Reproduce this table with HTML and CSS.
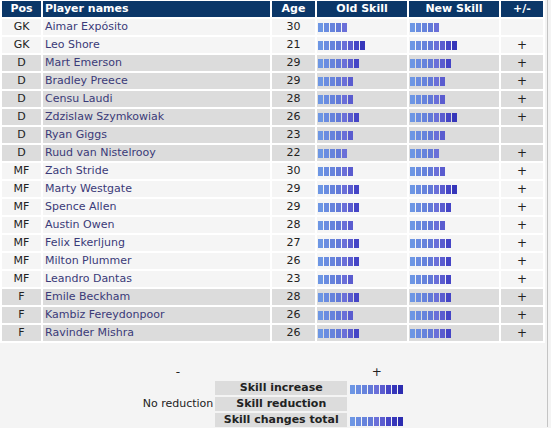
FILE: index.html
```html
<!DOCTYPE html>
<html>
<head>
<meta charset="utf-8">
<link rel="stylesheet" href="styles.css">
</head>
<body>
<div class="page">
<table class="squad">
  <thead>
    <tr>
      <th class="c-pos">Pos</th>
      <th class="c-name">Player names</th>
      <th class="c-age">Age</th>
      <th class="c-skill">Old Skill</th>
      <th class="c-skill">New Skill</th>
      <th class="c-pm">+/-</th>
    </tr>
  </thead>
  <tbody>
    <tr><td class="pos">GK</td><td class="name">Aimar Expósito</td><td class="age">30</td><td class="sk"><div class="bar" style="width:29px"></div></td><td class="sk"><div class="bar" style="width:29px"></div></td><td class="pm"></td></tr>
    <tr><td class="pos">GK</td><td class="name">Leo Shore</td><td class="age">21</td><td class="sk"><div class="bar" style="width:47px"></div></td><td class="sk"><div class="bar" style="width:47px"></div></td><td class="pm">+</td></tr>
    <tr class="alt"><td class="pos">D</td><td class="name">Mart Emerson</td><td class="age">29</td><td class="sk"><div class="bar" style="width:41px"></div></td><td class="sk"><div class="bar" style="width:41px"></div></td><td class="pm">+</td></tr>
    <tr class="alt"><td class="pos">D</td><td class="name">Bradley Preece</td><td class="age">29</td><td class="sk"><div class="bar" style="width:35px"></div></td><td class="sk"><div class="bar" style="width:35px"></div></td><td class="pm">+</td></tr>
    <tr class="alt"><td class="pos">D</td><td class="name">Censu Laudi</td><td class="age">28</td><td class="sk"><div class="bar" style="width:35px"></div></td><td class="sk"><div class="bar" style="width:35px"></div></td><td class="pm">+</td></tr>
    <tr class="alt"><td class="pos">D</td><td class="name">Zdzislaw Szymkowiak</td><td class="age">26</td><td class="sk"><div class="bar" style="width:41px"></div></td><td class="sk"><div class="bar" style="width:47px"></div></td><td class="pm">+</td></tr>
    <tr class="alt"><td class="pos">D</td><td class="name">Ryan Giggs</td><td class="age">23</td><td class="sk"><div class="bar" style="width:35px"></div></td><td class="sk"><div class="bar" style="width:35px"></div></td><td class="pm"></td></tr>
    <tr class="alt"><td class="pos">D</td><td class="name">Ruud van Nistelrooy</td><td class="age">22</td><td class="sk"><div class="bar" style="width:29px"></div></td><td class="sk"><div class="bar" style="width:29px"></div></td><td class="pm">+</td></tr>
    <tr><td class="pos">MF</td><td class="name">Zach Stride</td><td class="age">30</td><td class="sk"><div class="bar" style="width:35px"></div></td><td class="sk"><div class="bar" style="width:35px"></div></td><td class="pm">+</td></tr>
    <tr><td class="pos">MF</td><td class="name">Marty Westgate</td><td class="age">29</td><td class="sk"><div class="bar" style="width:41px"></div></td><td class="sk"><div class="bar" style="width:47px"></div></td><td class="pm">+</td></tr>
    <tr><td class="pos">MF</td><td class="name">Spence Allen</td><td class="age">29</td><td class="sk"><div class="bar" style="width:41px"></div></td><td class="sk"><div class="bar" style="width:41px"></div></td><td class="pm">+</td></tr>
    <tr><td class="pos">MF</td><td class="name">Austin Owen</td><td class="age">28</td><td class="sk"><div class="bar" style="width:35px"></div></td><td class="sk"><div class="bar" style="width:35px"></div></td><td class="pm">+</td></tr>
    <tr><td class="pos">MF</td><td class="name">Felix Ekerljung</td><td class="age">27</td><td class="sk"><div class="bar" style="width:41px"></div></td><td class="sk"><div class="bar" style="width:41px"></div></td><td class="pm">+</td></tr>
    <tr><td class="pos">MF</td><td class="name">Milton Plummer</td><td class="age">26</td><td class="sk"><div class="bar" style="width:41px"></div></td><td class="sk"><div class="bar" style="width:41px"></div></td><td class="pm">+</td></tr>
    <tr><td class="pos">MF</td><td class="name">Leandro Dantas</td><td class="age">23</td><td class="sk"><div class="bar" style="width:35px"></div></td><td class="sk"><div class="bar" style="width:41px"></div></td><td class="pm">+</td></tr>
    <tr class="alt"><td class="pos">F</td><td class="name">Emile Beckham</td><td class="age">28</td><td class="sk"><div class="bar" style="width:41px"></div></td><td class="sk"><div class="bar" style="width:41px"></div></td><td class="pm">+</td></tr>
    <tr class="alt"><td class="pos">F</td><td class="name">Kambiz Fereydonpoor</td><td class="age">26</td><td class="sk"><div class="bar" style="width:35px"></div></td><td class="sk"><div class="bar" style="width:41px"></div></td><td class="pm">+</td></tr>
    <tr class="alt"><td class="pos">F</td><td class="name">Ravinder Mishra</td><td class="age">26</td><td class="sk"><div class="bar" style="width:41px"></div></td><td class="sk"><div class="bar" style="width:41px"></div></td><td class="pm">+</td></tr>
  </tbody>
</table>

<table class="legend">
  <tr><td class="l-left l-sign">-</td><td class="l-mid l-blank"></td><td class="l-right l-sign">+</td></tr>
  <tr><td class="l-left"></td><td class="l-mid">Skill increase</td><td class="l-right"><div class="bar" style="width:53px"></div></td></tr>
  <tr><td class="l-left">No reduction</td><td class="l-mid">Skill reduction</td><td class="l-right"></td></tr>
  <tr><td class="l-left"></td><td class="l-mid">Skill changes total</td><td class="l-right"><div class="bar" style="width:53px"></div></td></tr>
</table>
</div>
</body>
</html>
```

FILE: styles.css
```css
html, body {
  margin: 0;
  padding: 0;
  background: #f4f4f4;
}
body {
  font-family: "DejaVu Sans", Verdana, sans-serif;
  font-size: 11px;
  color: #222;
}
.page {
  width: 548px;
  height: 428px;
  border-right: 1px solid #c4c4c4;
  box-sizing: border-box;
  background: #f4f4f4;
}
.squad {
  border-collapse: separate;
  border-spacing: 2px;
  table-layout: fixed;
  width: 545px;
  background: #fff;
  margin-top: -1px;
}
.squad th {
  background: #0b3768;
  color: #fff;
  font-weight: bold;
  height: 16px;
  padding: 0;
  text-align: center;
  line-height: 16px;
}
.squad th.c-name { text-align: left; padding-left: 2px; }
.c-pos { width: 39px; }
.c-name { width: 225px; }
.c-age { width: 43px; }
.c-skill { width: 90px; }
.c-pm { width: 42px; }
.squad td {
  background: #f5f5f5;
  height: 16px;
  padding: 0;
  line-height: 16px;
  white-space: nowrap;
}
.squad tr.alt td { background: #dcdcdc; }
.pos { text-align: center; }
.name { color: #3a3a78; padding-left: 2px !important; }
.age { text-align: center; }
.sk { padding-left: 1px !important; }
.pm { text-align: center; font-size: 12px; }
.bar {
  height: 9px;
  margin-top: 1px;
  background: linear-gradient(to right,
    #6d96e4 0 6px, #6a8ce0 6px 12px, #6683dc 12px 18px, #6279d8 18px 24px,
    #6a6fd8 24px 30px, #5a5ccf 30px 36px, #4545c6 36px 42px, #3636ba 42px 48px, #2c2cb0 48px 54px);
  -webkit-mask-image: repeating-linear-gradient(to right, #000 0 5px, transparent 5px 6px);
  mask-image: repeating-linear-gradient(to right, #000 0 5px, transparent 5px 6px);
}
.legend {
  border-collapse: separate;
  border-spacing: 2px;
  margin: 20px auto 0 auto;
}
.legend td {
  height: 14px;
  padding: 0;
  line-height: 14px;
  white-space: nowrap;
}
.l-left { width: 70px; text-align: right; }
.l-sign { text-align: center; font-size: 12px; color: #222; }
.l-mid { width: 132px; background: #dcdcdc; font-weight: bold; text-align: center; }
.l-mid.l-blank { background: transparent; }
.l-right { width: 55px; }
.l-right .bar { margin-top: 2px; margin-left: 1px; }
```
